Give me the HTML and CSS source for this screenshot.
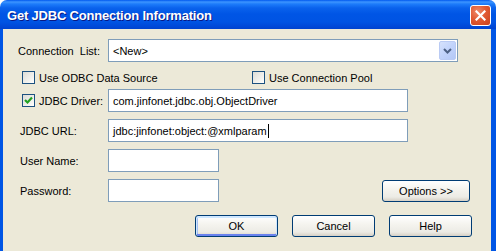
FILE: index.html
```html
<!DOCTYPE html>
<html lang="en">
<head>
    <meta charset="UTF-8">
    <title>Get JDBC Connection Information</title>
    <link rel="stylesheet" href="styles.css">
</head>
<body>
  <div class="window">
    <div class="titlebar">
      <span class="title">Get JDBC Connection Information</span>
      <span class="close">
        <svg width="11" height="11" viewBox="0 0 11 11"><path d="M1.5 1.5 L9.5 9.5 M9.5 1.5 L1.5 9.5" stroke="#fff" stroke-width="2.2" stroke-linecap="square"/></svg>
      </span>
    </div>
    <div class="client">
      <div class="row row-list">
        <label class="lbl lbl-list">Connection  List:</label>
        <div class="combo">
          <span class="combo-text">&lt;New&gt;</span>
          <span class="drop">
            <svg width="9" height="6" viewBox="0 0 9 6"><path d="M1 1 L4.5 4.5 L8 1" fill="none" stroke="#4d6185" stroke-width="2"/></svg>
          </span>
        </div>
      </div>
      <div class="row row-checks">
        <label class="check check-odbc"><span class="box"></span>Use ODBC Data Source</label>
        <label class="check"><span class="box"></span>Use Connection Pool</label>
      </div>
      <div class="row row-driver">
        <label class="check check-driver">
          <span class="box">
            <svg width="9" height="9" viewBox="0 0 9 9"><path d="M1 4 L3.5 6.5 L8 1.5" fill="none" stroke="#21a121" stroke-width="2.2"/></svg>
          </span>JDBC Driver:
        </label>
        <div class="field field-wide">com.jinfonet.jdbc.obj.ObjectDriver</div>
      </div>
      <div class="row row-url">
        <label class="lbl">JDBC URL:</label>
        <div class="field field-wide">jdbc:jinfonet:object:@xmlparam<span class="caret"></span></div>
      </div>
      <div class="row row-user">
        <label class="lbl">User Name:</label>
        <div class="field field-short"></div>
      </div>
      <div class="row row-pass">
        <label class="lbl">Password:</label>
        <div class="field field-short"></div>
        <button class="btn btn-options">Options &gt;&gt;</button>
      </div>
      <div class="row row-buttons">
        <button class="btn btn-default">OK</button>
        <button class="btn">Cancel</button>
        <button class="btn">Help</button>
      </div>
    </div>
  </div>
</body>
</html>
```
FILE: styles.css
```css
body, html {
  margin: 0;
  background-color: #fff;
  font-family: 'Liberation Sans', Arial, sans-serif;
  font-size: 11px;
  color: #000;
}
.window {
  width: 496px;
  height: 251px;
}
.titlebar {
  height: 29px;
  display: flex;
  align-items: center;
  justify-content: space-between;
  padding: 0 5px 0 7px;
  box-sizing: border-box;
  border-radius: 7px 7px 0 0;
  background: linear-gradient(to bottom, #0058ee 0, #3d95ff 2px, #1d7cfa 4px, #0a62ec 8px, #0055e5 14px, #0054e3 22px, #004ad9 26px, #0043cf 29px);
}
.title {
  color: #fff;
  font-weight: bold;
  font-size: 13px;
  letter-spacing: -0.2px;
  text-shadow: 1px 1px #0a1883;
  margin-top: 2px;
}
.close {
  width: 21px;
  height: 21px;
  box-sizing: border-box;
  border: 1px solid #fff;
  border-radius: 3px;
  background: radial-gradient(circle at 35% 30%, #ef8a6a 0, #e15a33 45%, #c9401b 100%);
  display: flex;
  align-items: center;
  justify-content: center;
  margin-top: 1px;
}
.client {
  height: 218px;
  background-color: #ece9d8;
  border-left: 3px solid #0055e5;
  border-right: 5px solid #0055e5;
  border-bottom: 4px solid #0041cb;
  padding-top: 10px;
  box-sizing: content-box;
}
.row {
  display: flex;
  align-items: center;
}
.lbl {
  width: 88px;
  margin-left: 17px;
}
.lbl-list {
  width: 90px;
  margin-left: 15px;
  white-space: pre;
}
.combo {
  width: 350px;
  height: 23px;
  box-sizing: border-box;
  border: 1px solid #7f9db9;
  background: #fff;
  display: flex;
  align-items: center;
  justify-content: space-between;
  padding: 1px;
}
.combo-text {
  padding-left: 3px;
}
.drop {
  width: 17px;
  height: 19px;
  box-sizing: border-box;
  border: 1px solid #bacbf4;
  border-radius: 2px;
  background: linear-gradient(135deg, #d6e2fc 0, #c1d3fb 50%, #b4c8f6 100%);
  display: flex;
  align-items: center;
  justify-content: center;
}
.row-checks {
  margin-top: 8px;
  height: 15px;
  padding-left: 19px;
}
.check {
  display: flex;
  align-items: center;
}
.check-odbc {
  width: 230px;
}
.check-driver {
  width: 86px;
  margin-left: 19px;
}
.box {
  width: 13px;
  height: 13px;
  box-sizing: border-box;
  border: 1px solid #1c5180;
  background: linear-gradient(135deg, #dcdcd7 0, #f0f0ec 60%, #fff 100%);
  margin-right: 4px;
  display: flex;
  align-items: center;
  justify-content: center;
}
.field {
  height: 23px;
  box-sizing: border-box;
  border: 1px solid #7f9db9;
  background: #fff;
  padding-left: 4px;
  display: flex;
  align-items: center;
}
.field-wide {
  width: 300px;
}
.field-short {
  width: 111px;
}
.caret {
  display: inline-block;
  width: 1px;
  height: 14px;
  background: #000;
  margin-left: 1px;
}
.row-driver {
  margin-top: 4px;
}
.row-url {
  margin-top: 7px;
}
.row-user,
.row-pass {
  margin-top: 7px;
}
.btn {
  width: 83px;
  height: 22px;
  box-sizing: border-box;
  border: 1px solid #003c74;
  border-radius: 3px;
  background: linear-gradient(to bottom, #fff 0, #f5f4ef 40%, #ecebe5 80%, #d6d0c5 100%);
  font-family: inherit;
  font-size: 11px;
  color: #000;
  padding: 0;
}
.btn-options {
  width: 88px;
  margin-left: auto;
  margin-right: 21px;
  margin-top: 1px;
}
.btn-default {
  box-shadow: inset 0 1px 0 1px #cee7ff, inset 0 -2px 0 0 #6982ee, inset 1px 0 0 1px #a6c0f2;
}
.row-buttons {
  margin-top: 13px;
  justify-content: flex-end;
  gap: 14px;
  padding-right: 19px;
}
```
